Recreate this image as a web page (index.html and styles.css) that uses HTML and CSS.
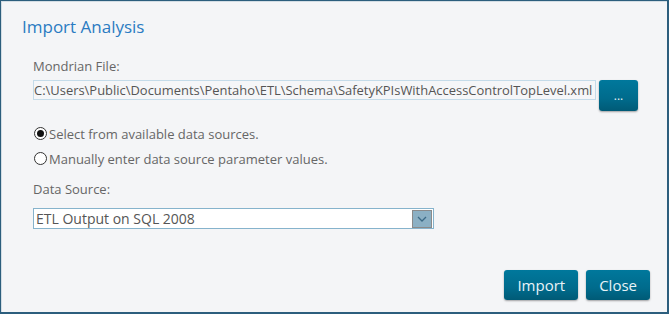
FILE: index.html
```html
<!DOCTYPE html>
<html lang="en">
<head>
  <meta charset="UTF-8" />
  <title>Import Analysis</title>
  <link rel="stylesheet" href="styles.css">
</head>
<body>
  <div class="dialog">
    <h1 class="dialog-title">Import Analysis</h1>
    <div class="dialog-body">
      <div class="field-label">Mondrian File:</div>
      <div class="file-row">
        <input type="text" class="file-input" value="C:\Users\Public\Documents\Pentaho\ETL\Schema\SafetyKPIsWithAccessControlTopLevel.xml" readonly />
        <button class="btn btn-browse">...</button>
      </div>
      <div class="radio-group">
        <label class="radio-row"><span class="radio checked"></span>Select from available data sources.</label>
        <label class="radio-row"><span class="radio"></span>Manually enter data source parameter values.</label>
      </div>
      <div class="field-label">Data Source:</div>
      <div class="select">
        <span class="select-text">ETL Output on SQL 2008</span>
        <span class="select-arrow">
          <svg width="10" height="6" viewBox="0 0 10 6"><path d="M1 1 L5 5 L9 1" fill="none" stroke="#3c6a86" stroke-width="1.3"/></svg>
        </span>
      </div>
    </div>
    <div class="dialog-footer">
      <button class="btn btn-action">Import</button>
      <button class="btn btn-action">Close</button>
    </div>
  </div>
</body>
</html>
```

FILE: styles.css
```css
body {
  margin: 0;
  font-family: 'Open Sans', 'Liberation Sans', sans-serif;
  color: #666;
}
.dialog {
  box-sizing: border-box;
  width: 669px;
  height: 314px;
  background-color: #f4f5f7;
  border: 1px solid #2c5e7d;
  border-right-width: 2px;
  border-bottom-width: 2px;
  box-shadow: inset 1px 1px 0 #d3dde4;
  padding: 14px 0 0 21px;
  display: flex;
  flex-direction: column;
}
.dialog-title {
  margin: 0;
  font-size: 17px;
  font-weight: normal;
  line-height: 24px;
  color: #2a7bc2;
}
.dialog-body {
  padding-left: 11px;
  margin-top: 18px;
}
.field-label {
  font-size: 13px;
  line-height: 18px;
}
.file-row {
  display: flex;
  align-items: flex-start;
  margin-top: 5px;
}
.file-input {
  box-sizing: border-box;
  width: 563px;
  height: 20px;
  margin: 0;
  padding: 0;
  border: 1px solid #c4dbe9;
  background-color: #f5f6f8;
  font-family: inherit;
  font-size: 12.95px;
  color: #555;
  outline: none;
}
.btn {
  border: none;
  border-radius: 3px;
  color: #e9f3f7;
  font-family: inherit;
  background: linear-gradient(#00789c, #006b8c 60%, #005a76);
  box-shadow: 0 1px 2px rgba(0, 0, 0, 0.35);
  cursor: pointer;
  padding: 0;
}
.btn-browse {
  width: 39px;
  height: 31px;
  margin-left: 3px;
  font-size: 12px;
  line-height: 31px;
}
.radio-group {
  margin-top: 10px;
  margin-bottom: 9px;
}
.radio-row {
  display: flex;
  align-items: center;
  height: 25px;
  font-size: 13px;
}
.radio {
  box-sizing: border-box;
  width: 13px;
  height: 13px;
  border: 1px solid #333;
  border-radius: 50%;
  background: #fff;
  margin: 0 2px 0 1px;
  display: flex;
  align-items: center;
  justify-content: center;
}
.radio.checked::after {
  content: "";
  width: 7px;
  height: 7px;
  border-radius: 50%;
  background: #111;
}
.select {
  box-sizing: border-box;
  width: 401px;
  height: 21px;
  margin-top: 10px;
  border: 1px solid #86b3cc;
  background-color: #fff;
  display: flex;
  align-items: center;
  justify-content: space-between;
  padding: 0 1px 0 2px;
}
.select-text {
  font-size: 14px;
  color: #555;
}
.select-arrow {
  box-sizing: border-box;
  width: 20px;
  height: 18px;
  background-color: #8bb0c4;
  border: 1px solid #8a8a8a;
  display: flex;
  align-items: center;
  justify-content: center;
}
.dialog-footer {
  margin-top: auto;
  margin-bottom: 12px;
  display: flex;
  justify-content: flex-end;
  gap: 8px;
  padding-right: 17px;
}
.btn-action {
  height: 30px;
  font-size: 15px;
  padding: 0 13px;
}
```
